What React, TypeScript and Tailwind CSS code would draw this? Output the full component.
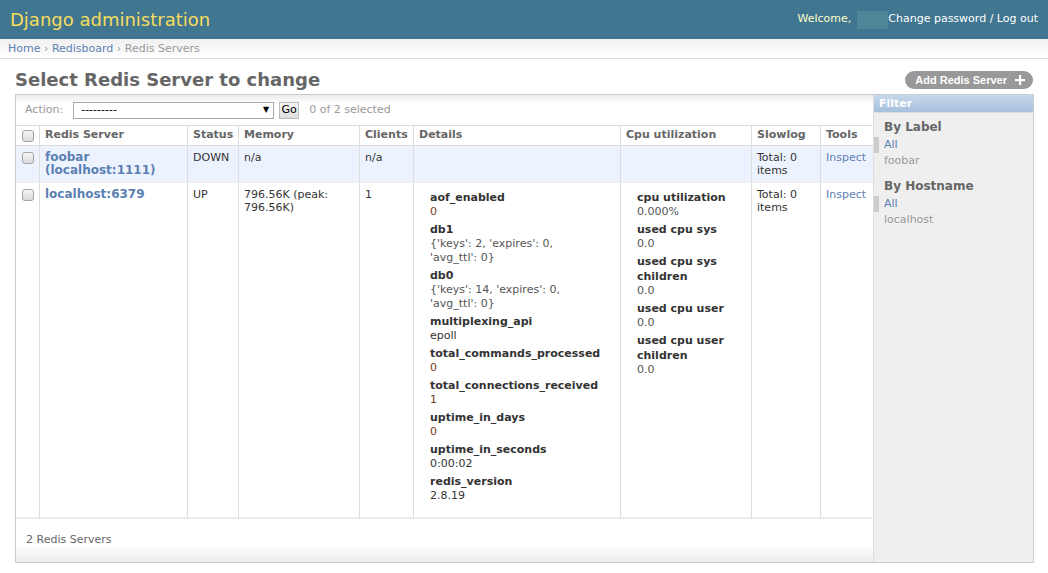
import React from 'react';

type Entry = { label: string; value: React.ReactNode };

const num = 'text-[#7a3a1a]';
const str = 'text-[#555]';

const details: Entry[] = [
  { label: 'aof_enabled', value: <span className={num}>0</span> },
  {
    label: 'db1',
    value: (
      <span className={str}>
        {"{'keys': 2, 'expires': 0,"}
        <br />
        {"'avg_ttl': 0}"}
      </span>
    ),
  },
  {
    label: 'db0',
    value: (
      <span className={str}>
        {"{'keys': 14, 'expires': 0,"}
        <br />
        {"'avg_ttl': 0}"}
      </span>
    ),
  },
  { label: 'multiplexing_api', value: <span className="text-[#333]">epoll</span> },
  { label: 'total_commands_processed', value: <span className={num}>0</span> },
  { label: 'total_connections_received', value: <span className={num}>1</span> },
  { label: 'uptime_in_days', value: <span className={num}>0</span> },
  { label: 'uptime_in_seconds', value: <span className="text-[#333]">0:00:02</span> },
  { label: 'redis_version', value: <span className="text-[#333]">2.8.19</span> },
];

const cpu: Entry[] = [
  { label: 'cpu utilization', value: <span className={str}>0.000%</span> },
  { label: 'used cpu sys', value: <span className={str}>0.0</span> },
  { label: 'used cpu sys children', value: <span className={str}>0.0</span> },
  { label: 'used cpu user', value: <span className={str}>0.0</span> },
  { label: 'used cpu user children', value: <span className={str}>0.0</span> },
];

const Checkbox = () => (
  <span className="block w-[12px] h-[12px] rounded-[3px] border border-[#a3a3a3] bg-gradient-to-b from-[#f6f6f6] to-[#dadada]" />
);

const InfoList = ({ items }: { items: Entry[] }) => (
  <div className="flex flex-col gap-[3px]">
    {items.map((e) => (
      <div key={e.label}>
        <div className="font-bold leading-[15px] text-[#333]">{e.label}</div>
        <div className="leading-[14px]">{e.value}</div>
      </div>
    ))}
  </div>
);

const th = 'h-[20px] border-b border-l border-[#ddd] px-[5px] text-left align-middle font-bold text-[#666]';
const cell = 'border-b border-l border-[#ddd] border-b-[#eee] px-[5px] pt-[5px] pb-[5px] align-top leading-[13px]';
const td = `${cell} text-[#333]`;
const link = `${cell} text-[#5b80b2]`;
const name = `${cell} text-[12px] font-bold text-[#5b80b2]`;
const info = 'border-b border-l border-[#ddd] border-b-[#eee] pl-[16px] pr-[5px] pt-[7px] pb-[14px] align-top';

export default function App() {
  return (
    <div className="min-h-[573px] bg-white font-['DejaVu_Sans',Verdana,sans-serif] text-[11px] text-[#333]">
      {/* header */}
      <div className="flex h-[39px] items-center justify-between bg-[#417690] px-[10px]">
        <div className="text-[18px] text-[#f5dd5d]">Django administration</div>
        <div className="flex items-center text-[11px]">
          <span className="text-[#ffc]">Welcome,</span>
          <span className="ml-[6px] inline-block h-[18px] w-[31px] bg-[#4f8599]" />
          <span className="text-white">Change password / Log out</span>
        </div>
      </div>

      {/* breadcrumbs */}
      <div className="h-[20px] border-b border-[#ddd] bg-gradient-to-b from-[#f0f0f0] to-white px-[8px] leading-[19px] text-[#999]">
        <span className="text-[#5b80b2]">Home</span> › <span className="text-[#5b80b2]">Redisboard</span> › Redis Servers
      </div>

      {/* content */}
      <div className="pl-[15px] pt-[10px]">
        <div className="flex items-start justify-between pr-[15px]">
          <h1 className="text-[18px] font-bold leading-[22px] text-[#666]">Select Redis Server to change</h1>
          <div className="mt-[2px] flex h-[18px] items-center rounded-[15px] bg-[#999] pl-[10px] pr-[8px] font-['Liberation_Sans',Arial,sans-serif] text-[11px] font-bold text-white">
            Add Redis Server
            <svg className="ml-[8px]" width="10" height="10" viewBox="0 0 10 10">
              <rect x="4" y="0" width="2.2" height="10" fill="white" />
              <rect x="0" y="4" width="10" height="2.2" fill="white" />
            </svg>
          </div>
        </div>

        <div className="mt-[3px] flex w-[1019px] border border-[#ccc]">
          {/* list */}
          <div className="flex w-[857px] flex-col">
            <div className="flex h-[31px] items-center border-b border-[#ddd] bg-[linear-gradient(#ebebeb,#fff_9px)] pl-[9px]">
              <span className="text-[#999]">Action:</span>
              <div className="ml-[10px] flex h-[17px] w-[201px] items-center justify-between border border-[#a9a9a9] bg-white pl-[7px] pr-[4px] text-black">
                <span>---------</span>
                <span className="text-[8px]">▼</span>
              </div>
              <div className="ml-[5px] flex h-[17px] w-[20px] items-center justify-center border border-[#bbb] bg-gradient-to-b from-[#f4f4f4] to-[#dedede] text-black">
                Go
              </div>
              <span className="ml-[10px] text-[#999]">0 of 2 selected</span>
            </div>

            <table className="w-full table-fixed border-separate border-spacing-0">
              <thead>
                <tr>
                  <th className="w-[23px] h-[20px] border-b border-[#ddd] pl-[6px] align-middle">
                    <Checkbox />
                  </th>
                  <th className={`${th} w-[148px]`}>Redis Server</th>
                  <th className={`${th} w-[51px]`}>Status</th>
                  <th className={`${th} w-[121px]`}>Memory</th>
                  <th className={`${th} w-[54px]`}>Clients</th>
                  <th className={`${th} w-[207px]`}>Details</th>
                  <th className={`${th} w-[131px]`}>Cpu utilization</th>
                  <th className={`${th} w-[69px]`}>Slowlog</th>
                  <th className={`${th} w-[53px]`}>Tools</th>
                </tr>
              </thead>
              <tbody>
                <tr className="bg-[#edf3fe]">
                  <td className="border-b border-[#eee] pl-[6px] pt-[6px] align-top"><Checkbox /></td>
                  <td className={name}>foobar (localhost:1111)</td>
                  <td className={td}>DOWN</td>
                  <td className={td}>n/a</td>
                  <td className={td}>n/a</td>
                  <td className={td}></td>
                  <td className={td}></td>
                  <td className={td}>Total: 0 items</td>
                  <td className={link}>Inspect</td>
                </tr>
                <tr>
                  <td className="border-b border-[#eee] pl-[6px] pt-[6px] align-top"><Checkbox /></td>
                  <td className={name}>localhost:6379</td>
                  <td className={td}>UP</td>
                  <td className={td}>796.56K (peak: 796.56K)</td>
                  <td className={td}>1</td>
                  <td className={info}>
                    <InfoList items={details} />
                  </td>
                  <td className={info}>
                    <InfoList items={cpu} />
                  </td>
                  <td className={td}>Total: 0 items</td>
                  <td className={link}>Inspect</td>
                </tr>
              </tbody>
            </table>

            <div className="h-[44px] border-t border-[#eee] bg-[linear-gradient(#fff_60%,#ececec)] pl-[10px] leading-[42px] text-[#666]">
              2 Redis Servers
            </div>
          </div>

          {/* filter */}
          <div className="w-[160px] border-l border-[#ddd] bg-[#efefef]">
            <div className="h-[18px] border-b border-[#ddd] bg-gradient-to-b from-[#c6d8eb] to-[#a6c0dd] pl-[5px] font-bold leading-[17px] text-white">
              Filter
            </div>
            <div className="mt-[7px] pl-[10px] text-[12px] font-bold leading-[15px] text-[#666]">By Label</div>
            <ul className="mt-[2px]">
              <li className="border-l-[5px] border-[#ccc] pl-[5px] leading-[16px] text-[#5b80b2]">All</li>
              <li className="pl-[10px] leading-[16px] text-[#999]">foobar</li>
            </ul>
            <div className="mt-[10px] pl-[10px] text-[12px] font-bold leading-[15px] text-[#666]">By Hostname</div>
            <ul className="mt-[2px]">
              <li className="border-l-[5px] border-[#ccc] pl-[5px] leading-[16px] text-[#5b80b2]">All</li>
              <li className="pl-[10px] leading-[16px] text-[#999]">localhost</li>
            </ul>
          </div>
        </div>
      </div>
    </div>
  );
}
